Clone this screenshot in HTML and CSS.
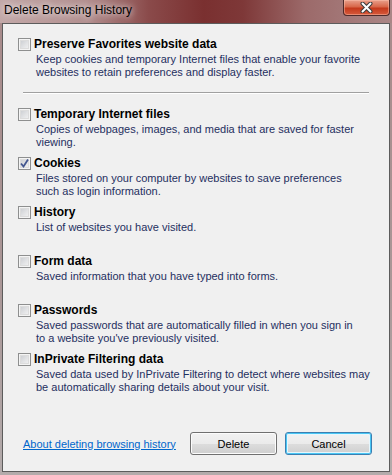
FILE: index.html
```html
<!DOCTYPE html>
<html lang="en">
<head>
  <meta charset="UTF-8" />
  <title>Delete Browsing History</title>
  <link rel="stylesheet" href="styles.css">
</head>
<body>

<div class="window">
  <div class="titlebar">
    <span class="title">Delete Browsing History</span>
    <button class="close-btn" title="Close">
      <svg width="13" height="11" viewBox="0 0 13 11">
        <path d="M2.5 1.5 L10.5 9.5 M10.5 1.5 L2.5 9.5" stroke="#3b3b3b" stroke-width="4" stroke-linecap="round"/>
        <path d="M2.5 1.5 L10.5 9.5 M10.5 1.5 L2.5 9.5" stroke="#fff" stroke-width="2" stroke-linecap="round"/>
      </svg>
    </button>
  </div>

  <div class="client">
    <div class="option">
      <label class="option-head"><span class="checkbox"></span><span class="option-title">Preserve Favorites website data</span></label>
      <p class="option-desc">Keep cookies and temporary Internet files that enable your favorite<br>websites to retain preferences and display faster.</p>
    </div>

    <hr class="separator">

    <div class="option">
      <label class="option-head"><span class="checkbox"></span><span class="option-title">Temporary Internet files</span></label>
      <p class="option-desc">Copies of webpages, images, and media that are saved for faster<br>viewing.</p>
    </div>
    <div class="option">
      <label class="option-head">
        <span class="checkbox checked">
          <svg width="11" height="11" viewBox="0 0 11 11"><path d="M2 5.5 L4.5 8.5 L9 1.5" fill="none" stroke="#42568f" stroke-width="1.8"/></svg>
        </span>
        <span class="option-title">Cookies</span>
      </label>
      <p class="option-desc">Files stored on your computer by websites to save preferences<br>such as login information.</p>
    </div>
    <div class="option">
      <label class="option-head"><span class="checkbox"></span><span class="option-title">History</span></label>
      <p class="option-desc">List of websites you have visited.</p>
    </div>
    <div class="option">
      <label class="option-head"><span class="checkbox"></span><span class="option-title">Form data</span></label>
      <p class="option-desc">Saved information that you have typed into forms.</p>
    </div>
    <div class="option">
      <label class="option-head"><span class="checkbox"></span><span class="option-title">Passwords</span></label>
      <p class="option-desc">Saved passwords that are automatically filled in when you sign in<br>to a website you've previously visited.</p>
    </div>
    <div class="option">
      <label class="option-head"><span class="checkbox"></span><span class="option-title">InPrivate Filtering data</span></label>
      <p class="option-desc">Saved data used by InPrivate Filtering to detect where websites may<br>be automatically sharing details about your visit.</p>
    </div>

    <div class="footer">
      <a href="#" class="help-link">About deleting browsing history</a>
      <div class="buttons">
        <button class="btn">Delete</button>
        <button class="btn btn-default">Cancel</button>
      </div>
    </div>
  </div>
</div>

</body>
</html>
```

FILE: styles.css
```css
html, body {
  margin: 0; padding: 0;
  width: 392px; height: 475px; overflow: hidden;
  font-family: "Liberation Sans", Arial, sans-serif;
}

.window {
  height: 475px;
  display: flex; flex-direction: column;
  background: linear-gradient(180deg, #a88a8a 0%, #aa9797 60%, #b3abab 100%);
}

/* glass title bar */
.titlebar {
  height: 23px; flex: none;
  display: flex; justify-content: space-between; align-items: flex-start;
  padding: 0 2px 0 4px;
  background: linear-gradient(90deg, #c2a8a8 0%, #b39090 22%, #8a4a4a 38%, #7a3030 52%, #7e3838 62%, #9c6a6a 78%, #aa8686 100%);
}
.title {
  font-size: 12px; line-height: 15px;
  padding-top: 3px;
  color: #000;
  text-shadow: 0 0 6px rgba(255,255,255,0.8), 0 0 10px rgba(255,255,255,0.6);
}

.close-btn {
  width: 47px; height: 16px;
  margin: 0; padding: 0;
  display: flex; align-items: center; justify-content: center;
  border: 1px solid #4e2a2a; border-top: none;
  border-radius: 0 0 4px 4px;
  background: linear-gradient(180deg, #e9a08c 0%, #d8674a 45%, #c4391c 55%, #d65a3c 100%);
  box-shadow: inset 0 0 0 1px rgba(255,200,180,0.45);
}

.client {
  flex: 1;
  margin: 0 2px 3px;
  border: 1px solid #5c5c5c;
  background: #f0f0f0;
  display: flex; flex-direction: column;
  padding: 14px 20px 16px 15px;
}

.option { height: 49px; flex: none; }

.option-head {
  display: flex; align-items: center; gap: 3px;
  height: 13px;
}

.checkbox {
  width: 13px; height: 13px; flex: none;
  box-sizing: border-box;
  border: 1px solid #8e8f8f;
  background: linear-gradient(135deg, #c4c7cc 0%, #e2e3e5 55%, #f6f6f6 100%);
  box-shadow: inset 0 0 0 1px #f4f4f4, inset 0 0 0 2px #dcdcdc;
  display: flex; align-items: center; justify-content: center;
}
.checkbox.checked svg { display: block; }

.option-title {
  font-size: 12px; font-weight: bold; line-height: 13px;
  color: #000;
}

.option-desc {
  margin: 2px 0 0 18px;
  font-size: 11px; line-height: 13px;
  color: #1f2f5f;
  white-space: nowrap;
}

.separator {
  height: 0; margin: 5px 0 14px 5px;
  border: none;
  border-top: 1px solid #a0a0a0;
  border-bottom: 1px solid #fff;
}

.footer {
  margin: auto -3px 0 5px;
  display: flex; align-items: center; justify-content: space-between;
}

.help-link {
  font-size: 11px; color: #0066cc;
  text-decoration: underline;
}

.buttons { display: flex; gap: 8px; }

.btn {
  width: 87px; height: 23px;
  padding: 0;
  font-family: "Liberation Sans", Arial, sans-serif;
  font-size: 11px; color: #000;
  border: 1px solid #707070; border-radius: 3px;
  background: linear-gradient(180deg, #f2f2f2 0%, #ebebeb 50%, #dddddd 51%, #cfcfcf 100%);
  box-shadow: inset 0 0 0 1px #fcfcfc;
}
.btn-default {
  border-color: #3c7fb1;
  box-shadow: inset 0 0 0 1px #48c6f4, inset 0 0 0 2px #e6f6fd;
}
```
